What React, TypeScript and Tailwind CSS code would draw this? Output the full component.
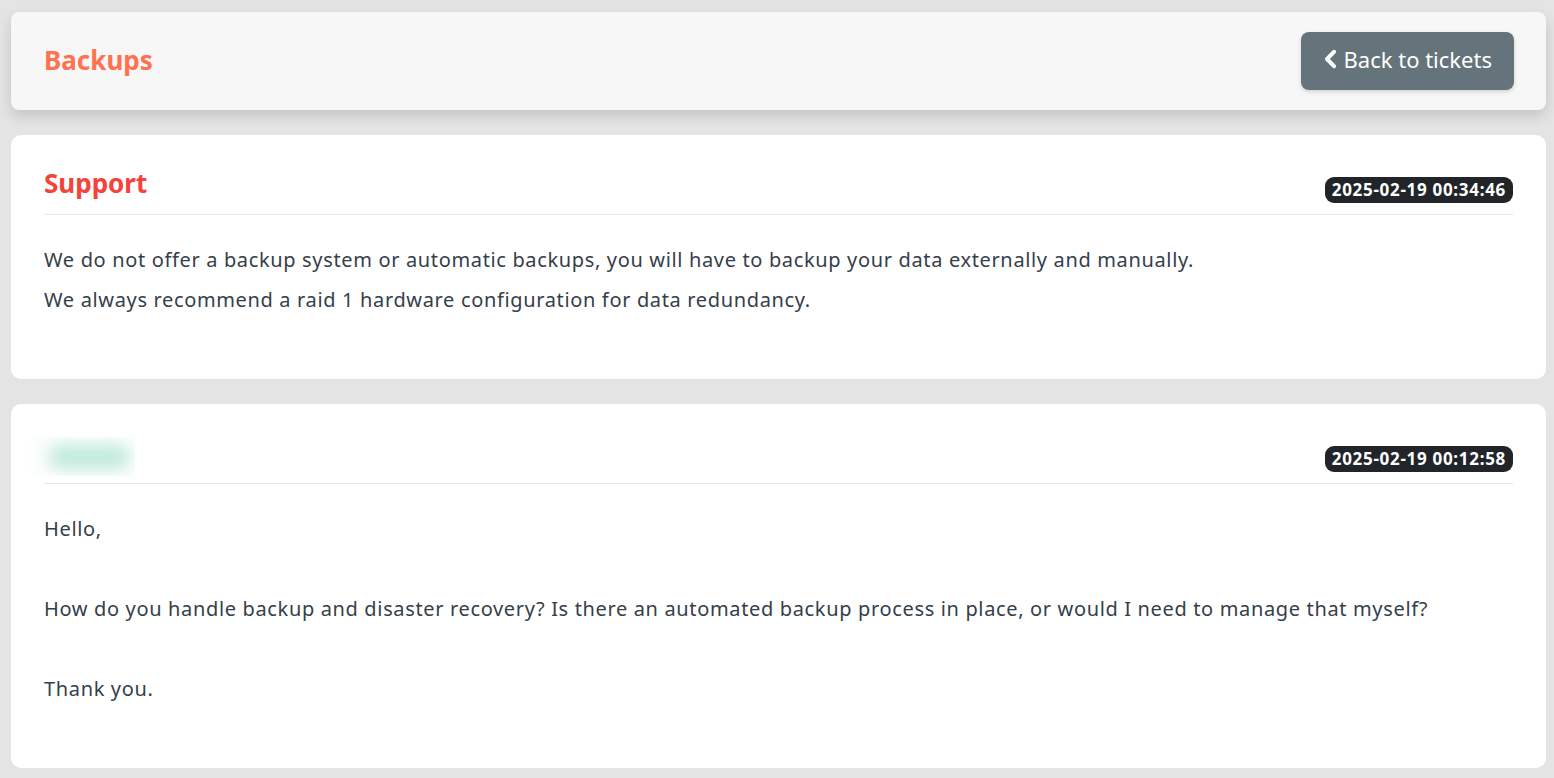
import React from 'react';

type Message = {
  author: string;
  staff: boolean;
  time: string;
  lines: string[];
};

const messages: Message[] = [
  {
    author: 'Support',
    staff: true,
    time: '2025-02-19 00:34:46',
    lines: [
      'We do not offer a backup system or automatic backups, you will have to backup your data externally and manually.',
      'We always recommend a raid 1 hardware configuration for data redundancy.',
    ],
  },
  {
    author: 'Client',
    staff: false,
    time: '2025-02-19 00:12:58',
    lines: [
      'Hello,',
      '',
      'How do you handle backup and disaster recovery? Is there an automated backup process in place, or would I need to manage that myself?',
      '',
      'Thank you.',
    ],
  },
];

const ChevronLeft = () => (
  <svg width="15" height="20" viewBox="0 0 15 20" fill="none" className="mr-[6px]">
    <path d="M11 2.8 L4 10 L11 17.2" stroke="white" strokeWidth="4" strokeLinecap="round" strokeLinejoin="round" />
  </svg>
);

const MessageCard: React.FC<{ msg: Message }> = ({ msg }) => (
  <div className="bg-white rounded-[10px] px-[33px] pt-[33px] pb-[59px]">
    <div className="flex items-end justify-between pb-[11px] border-b border-[#e4e6ea]">
      {msg.staff ? (
        <h3 className="mb-[4px] text-[26px] leading-[31px] font-bold text-[#f4433a]">{msg.author}</h3>
      ) : (
        // client name is masked
        <div className="-mb-[4px] -ml-[14px] h-[39px] w-[105px] overflow-hidden bg-[#fdfefe]">
          <div className="mt-[8px] ml-[18px] h-[24px] w-[82px] rounded-full bg-[#bfe9db] blur-[8px]" />
        </div>
      )}
      <span className="flex h-[26px] items-center rounded-[9px] bg-[#212529] px-[7px] text-[17px] font-bold tracking-[0.7px] text-white">
        {msg.time}
      </span>
    </div>
    <div className="pt-[25px] text-[20px] leading-[40px] tracking-[0.65px] text-[#34404a]">
      {msg.lines.map((line, i) => (
        <p key={i} className="min-h-[40px]">{line}</p>
      ))}
    </div>
  </div>
);

export default function App() {
  return (
    <div
      className="min-h-screen bg-[#e4e4e4] pl-[11px] pr-[8px] pt-[12px] pb-[10px]"
      style={{ fontFamily: '"Noto Sans", "Open Sans", sans-serif' }}
    >
      <div className="flex items-center justify-between rounded-[8px] bg-[#f7f7f7] pl-[33px] pr-[32px] py-[20px] shadow-[0_6px_14px_rgba(0,0,0,0.14)]">
        <h2 className="-mt-[2px] text-[26px] font-bold text-[#ff7250]">Backups</h2>
        <button className="flex h-[58px] items-center rounded-[8px] bg-[#65737a] pl-[22px] pr-[22px] pb-[4px] text-[22px] text-white shadow-[0_2px_4px_rgba(0,0,0,0.15)]">
          <ChevronLeft />
          Back to tickets
        </button>
      </div>
      <div className="mt-[25px] flex flex-col gap-[25px]">
        {messages.map((m) => (
          <MessageCard key={m.time} msg={m} />
        ))}
      </div>
    </div>
  );
}
